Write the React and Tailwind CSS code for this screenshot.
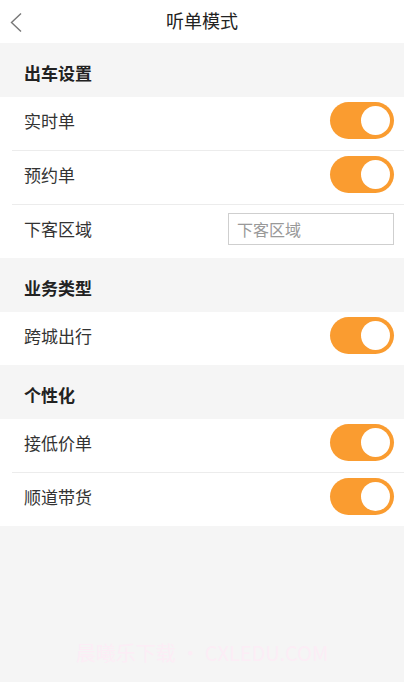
function Toggle() {
  return (
    <div className="flex h-[37px] w-[64px] items-center justify-end rounded-full bg-[#fa9c30] pr-[4px]">
      <div className="h-[29px] w-[29px] rounded-full bg-white" />
    </div>
  );
}

function SectionTitle({ children }) {
  return (
    <div className="flex h-[54px] items-center bg-[#f5f5f5] pl-[24px] pt-[5px] text-[17px] font-bold text-[#222]">
      {children}
    </div>
  );
}

function Row({ label, divider, children }) {
  return (
    <div className="bg-white">
      {divider && <div className="ml-[12px] h-px bg-[#ececec]" />}
      <div className="flex h-[53px] items-center justify-between pb-[6px] pl-[24px] pr-[10px]">
        <span className="text-[17px] text-[#333]">{label}</span>
        {children}
      </div>
    </div>
  );
}

export default function App() {
  return (
    <div
      className="flex min-h-[682px] flex-col bg-[#f5f5f5]"
      style={{ fontFamily: '"Noto Sans CJK SC", "Noto Sans", sans-serif' }}
    >
      {/* Header */}
      <div className="relative flex h-[43px] items-center justify-center bg-white">
        <svg className="absolute left-[9px] top-[12px]" width="14" height="21" viewBox="0 0 14 21" fill="none">
          <path d="M12 1.5 L2.5 10.5 L12 19.5" stroke="#777" strokeWidth="1.4" />
        </svg>
        <span className="pb-[2px] text-[18px] text-[#222]">听单模式</span>
      </div>

      <SectionTitle>出车设置</SectionTitle>
      <Row label="实时单">
        <Toggle />
      </Row>
      <Row label="预约单" divider>
        <Toggle />
      </Row>
      <Row label="下客区域" divider>
        <div className="flex h-[32px] w-[166px] items-center border border-[#cfcfcf] pl-[8px] text-[16px] text-[#999]">
          下客区域
        </div>
      </Row>

      <SectionTitle>业务类型</SectionTitle>
      <Row label="跨城出行">
        <Toggle />
      </Row>

      <SectionTitle>个性化</SectionTitle>
      <Row label="接低价单">
        <Toggle />
      </Row>
      <Row label="顺道带货" divider>
        <Toggle />
      </Row>

      {/* watermark */}
      <div className="mt-auto flex h-[44px] items-start justify-center text-[20px] text-[#fcedf6]">
        晨曦乐下载 • CXLEDU.COM
      </div>
    </div>
  );
}
